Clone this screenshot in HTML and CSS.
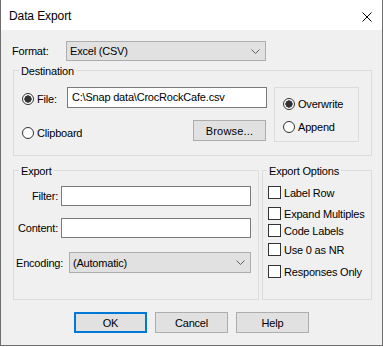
FILE: index.html
```html
<!DOCTYPE html>
<html>
<head>
<meta charset="utf-8">
<link rel="stylesheet" href="styles.css">
</head>
<body>
<div class="window">
  <div class="titlebar">
    <span class="title">Data Export</span>
    <svg class="close" width="10" height="10" viewBox="0 0 10 10"><path d="M0.5 0.5 L9.5 9.5 M9.5 0.5 L0.5 9.5" stroke="#000" stroke-width="1" fill="none"/></svg>
  </div>
  <div class="content">
    <div class="format-row">
      <span class="format-label">Format:</span>
      <div class="select format-select"><span>Excel (CSV)</span><svg class="chev" width="9" height="5" viewBox="0 0 9 5"><path d="M0.5 0.5 L4.5 4.5 L8.5 0.5" stroke="#606060" fill="none"/></svg></div>
    </div>

    <div class="group dest">
      <div class="legend">Destination</div>
      <div class="dest-inner">
        <div class="dest-left">
          <div class="row file-row">
            <div class="choice"><span class="radio checked"></span><span class="choice-text">File:</span></div>
            <div class="textbox path">C:\Snap data\CrocRockCafe.csv</div>
          </div>
          <div class="row clip-row">
            <div class="choice"><span class="radio"></span><span class="choice-text">Clipboard</span></div>
            <div class="button browse">Browse...</div>
          </div>
        </div>
        <div class="mode-box">
          <div class="row mode-row"><span class="radio checked"></span><span class="choice-text">Overwrite</span></div>
          <div class="row mode-row second"><span class="radio"></span><span class="choice-text">Append</span></div>
        </div>
      </div>
    </div>

    <div class="lower">
      <div class="group export">
        <div class="legend">Export</div>
        <div class="field-row filter-row">
          <span class="field-label">Filter:</span>
          <div class="textbox field-input"></div>
        </div>
        <div class="field-row content-row">
          <span class="field-label">Content:</span>
          <div class="textbox field-input"></div>
        </div>
        <div class="field-row encoding-row">
          <span class="enc-label">Encoding:</span>
          <div class="select enc-select"><span>(Automatic)</span><svg class="chev" width="9" height="5" viewBox="0 0 9 5"><path d="M0.5 0.5 L4.5 4.5 L8.5 0.5" stroke="#606060" fill="none"/></svg></div>
        </div>
      </div>
      <div class="group options">
        <div class="legend opt-legend">Export Options</div>
        <div class="check-row r1"><span class="checkbox"></span><span class="check-text">Label Row</span></div>
        <div class="check-row r2"><span class="checkbox"></span><span class="check-text">Expand Multiples</span></div>
        <div class="check-row r3"><span class="checkbox"></span><span class="check-text">Code Labels</span></div>
        <div class="check-row r4"><span class="checkbox"></span><span class="check-text">Use 0 as NR</span></div>
        <div class="check-row r5"><span class="checkbox"></span><span class="check-text">Responses Only</span></div>
      </div>
    </div>

    <div class="buttons">
      <div class="button dlg-btn default">OK</div>
      <div class="button dlg-btn">Cancel</div>
      <div class="button dlg-btn">Help</div>
    </div>
  </div>
</div>
</body>
</html>
```
FILE: styles.css
```css
* { box-sizing: border-box; }
html, body { margin: 0; padding: 0; background: #ffffff; }
body {
  font-family: "Liberation Sans", Arial, sans-serif;
  font-size: 11px;
  letter-spacing: -0.2px;
  color: #000;
}
.window {
  width: 383px;
  height: 346px;
  border: 1px solid #6e6e6e;
  border-top: none;
  background: #f0f0f0;
  display: flex;
  flex-direction: column;
}
.titlebar {
  flex: none;
  height: 30px;
  background: #fff;
  display: flex;
  align-items: flex-start;
  justify-content: space-between;
  padding: 0 10px 0 8px;
}
.title {
  font-size: 12px;
  line-height: 14px;
  margin-top: 9px;
  letter-spacing: -0.1px;
}
.close { margin-top: 12px; display: block; }

.content { padding: 0 10px 0 12px; }

.format-row {
  display: flex;
  align-items: center;
  height: 20px;
  margin-top: 11px;
}
.format-label { width: 54px; margin-left: -1px; }
.select {
  display: flex;
  align-items: center;
  justify-content: space-between;
  background: #e1e1e1;
  border: 1px solid #adadad;
  padding: 0 5px 0 3px;
}
.format-select { width: 200px; height: 20px; }
.chev { display: block; }

.group {
  border: 1px solid #dcdcdc;
}
.legend {
  width: max-content;
  height: 15px;
  line-height: 15px;
  margin: -7px 0 0 5px;
  padding: 0 2px;
  background: #f0f0f0;
}
.dest { margin-top: 9px; height: 86px; }
.dest-inner { display: flex; margin-top: 8px; }
.dest-left { width: 253px; padding-left: 8px; }
.row { display: flex; align-items: center; }
.file-row { height: 21px; }
.clip-row { height: 21px; margin-top: 12px; }
.choice { display: flex; align-items: center; width: 45px; }
.file-row .choice { margin-top: 3px; }
.clip-row .choice { margin-top: 5px; }
.radio {
  flex: none;
  width: 12px;
  height: 12px;
  border: 1px solid #333;
  border-radius: 50%;
  background: #fff;
}
.radio.checked {
  background: radial-gradient(circle, #333 0 3.4px, #fff 3.9px);
}
.choice-text { margin-left: 3px; white-space: nowrap; }
.textbox {
  background: #fff;
  border: 1px solid #7a7a7a;
  white-space: nowrap;
  overflow: hidden;
}
.path {
  width: 200px;
  height: 21px;
  line-height: 19px;
  padding-left: 4px;
}
.button {
  display: flex;
  align-items: center;
  justify-content: center;
  background: #e1e1e1;
  border: 1px solid #adadad;
}
.browse { width: 73px; height: 21px; margin-left: auto; margin-right: 1px; letter-spacing: 0.2px; }
.mode-box {
  width: 85px;
  height: 55px;
  margin-left: 7px;
  border: 1px solid #dcdcdc;
  padding: 8px 0 0 8px;
}
.mode-row { height: 15px; }
.mode-row.second { margin-top: 8px; }

.lower { display: flex; gap: 3px; margin-top: 14px; height: 130px; }
.export { width: 246px; }
.options { width: 110px; padding-left: 5px; }
.opt-legend { margin-left: -1px; }

.field-row { display: flex; align-items: center; padding-left: 2px; }
.filter-row { height: 20px; margin-top: 7px; }
.content-row { height: 20px; margin-top: 12px; }
.encoding-row { height: 21px; margin-top: 14px; }
.field-label {
  width: 45px;
  display: flex;
  justify-content: flex-end;
  overflow: hidden;
  white-space: nowrap;
  padding-right: 3px;
}
.field-input { width: 190px; height: 20px; }
.enc-label { width: 53px; }
.enc-select { width: 182px; height: 21px; padding-right: 5px; }

.check-row { display: flex; align-items: center; height: 13px; }
.r1 { margin-top: 7px; }
.r2 { margin-top: 8px; }
.r3 { margin-top: 4px; }
.r4 { margin-top: 6px; }
.r5 { margin-top: 9px; }
.checkbox {
  flex: none;
  width: 13px;
  height: 13px;
  border: 1px solid #333;
  background: #fff;
}
.check-text { margin-left: 3px; white-space: nowrap; }

.buttons { display: flex; gap: 8px; margin-top: 12px; padding-left: 61px; }
.dlg-btn { width: 73px; height: 21px; }
.dlg-btn.default { border: 2px solid #0078d7; }
```
